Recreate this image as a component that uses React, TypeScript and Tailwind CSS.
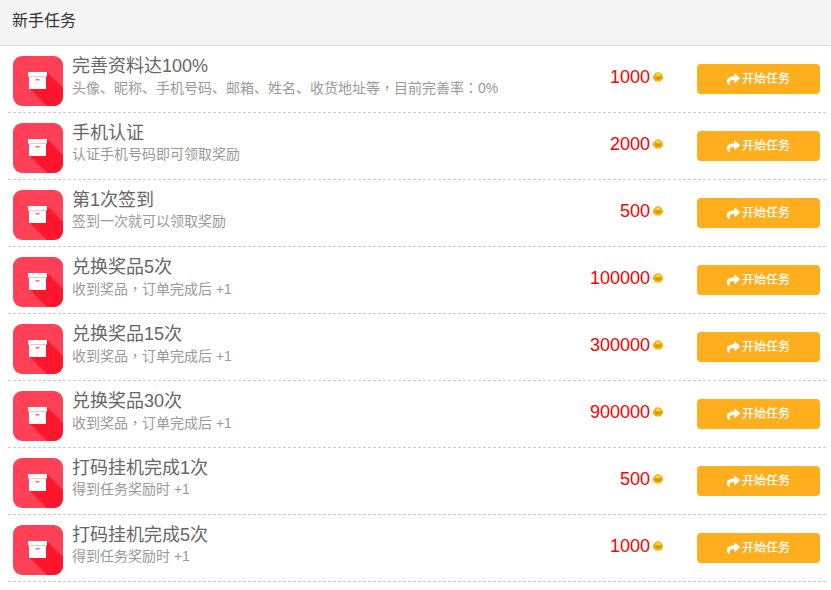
import React from 'react';
import { FaShare } from 'react-icons/fa';

interface Task {
  title: string;
  desc: string;
  points: number;
}

const tasks: Task[] = [
  { title: '完善资料达100%', desc: '头像、昵称、手机号码、邮箱、姓名、收货地址等，目前完善率：0%', points: 1000 },
  { title: '手机认证', desc: '认证手机号码即可领取奖励', points: 2000 },
  { title: '第1次签到', desc: '签到一次就可以领取奖励', points: 500 },
  { title: '兑换奖品5次', desc: '收到奖品，订单完成后 +1', points: 100000 },
  { title: '兑换奖品15次', desc: '收到奖品，订单完成后 +1', points: 300000 },
  { title: '兑换奖品30次', desc: '收到奖品，订单完成后 +1', points: 900000 },
  { title: '打码挂机完成1次', desc: '得到任务奖励时 +1', points: 500 },
  { title: '打码挂机完成5次', desc: '得到任务奖励时 +1', points: 1000 }
];

const TaskIcon = () => (
  <svg width="50" height="50" viewBox="0 0 50 50" className="shrink-0">
    <defs>
      <clipPath id="task-icon-clip">
        <rect width="50" height="50" rx="9" />
      </clipPath>
    </defs>
    <g clipPath="url(#task-icon-clip)">
      <rect width="50" height="50" fill="#ff4056" />
      <polygon points="34,16 50,32 50,50 34,50 16,32" fill="#ff152c" />
    </g>
    <rect x="15" y="16" width="19" height="4.5" fill="#fff" />
    <rect x="16" y="20.5" width="17" height="12.5" fill="#ffe6ea" />
    <rect x="16" y="21" width="17" height="12" fill="#fff" />
    <rect x="22.5" y="23" width="4" height="1.5" fill="#ff6b7c" />
  </svg>
);

const Coin = () => (
  <svg width="10" height="10" viewBox="0 0 10 10" className="shrink-0">
    <path d="M5 0 L7.5 1 L10 4 L10 6.5 L7.5 9.5 L2.5 9.5 L0 6.5 L0 4 L2.5 1 Z" fill="#f3b40e" />
    <path d="M1.5 5.5 L3.5 4.5 L6.5 4.5 L8.5 5.5 L6.5 7.5 L3.5 7.5 Z" fill="#d9920c" />
    <ellipse cx="5" cy="2.8" rx="2" ry="1.2" fill="#ffdc55" />
  </svg>
);

// comma and colon sit centred in their cell in the reference, the TC cut has that
const Desc = ({ text }: { text: string }) => (
  <>
    {text.split(/([，：])/).map((part, index) =>
      part === '，' || part === '：' ? (
        <span key={index} className="font-['Noto_Sans_CJK_TC',sans-serif]">
          {part}
        </span>
      ) : (
        <span key={index}>{part}</span>
      )
    )}
  </>
);

const App: React.FC = () => {
  return (
    <div className="min-h-[590px] w-[831px] overflow-hidden bg-white font-['Liberation_Sans','Noto_Sans_CJK_SC',sans-serif]">
      {/* Header */}
      <div className="flex h-[46px] items-center border-b border-[#dddddd] bg-[#f5f5f5] pb-[3px] pl-3 text-base text-[#333333]">
        新手任务
      </div>

      {/* Task list */}
      <div className="ml-2 mr-[5px]">
        {tasks.map((task) => (
          <div
            key={task.title}
            className="flex h-[67px] items-start border-b border-dashed border-[#cccccc] pt-2.5 pl-[5px]"
          >
            <TaskIcon />
            <div className="ml-[9px] min-w-0 flex-1">
              <div className="text-lg leading-5 text-[#666666]">{task.title}</div>
              <div className="mt-px text-sm leading-5 text-[#999999]">
                <Desc text={task.desc} />
              </div>
            </div>
            <div className="mt-2.5 flex h-[21px] items-center gap-[3px] text-lg text-[#ff0000]">
              <span>{task.points}</span>
              <Coin />
            </div>
            <button className="mr-1.5 mt-2 ml-[34px] flex h-[30px] w-[123px] items-center justify-center gap-[2px] rounded bg-[#ffae1d] text-xs font-medium text-white">
              <FaShare className="h-[13px] w-[13px]" />
              开始任务
            </button>
          </div>
        ))}
      </div>
    </div>
  );
};

export default App;
